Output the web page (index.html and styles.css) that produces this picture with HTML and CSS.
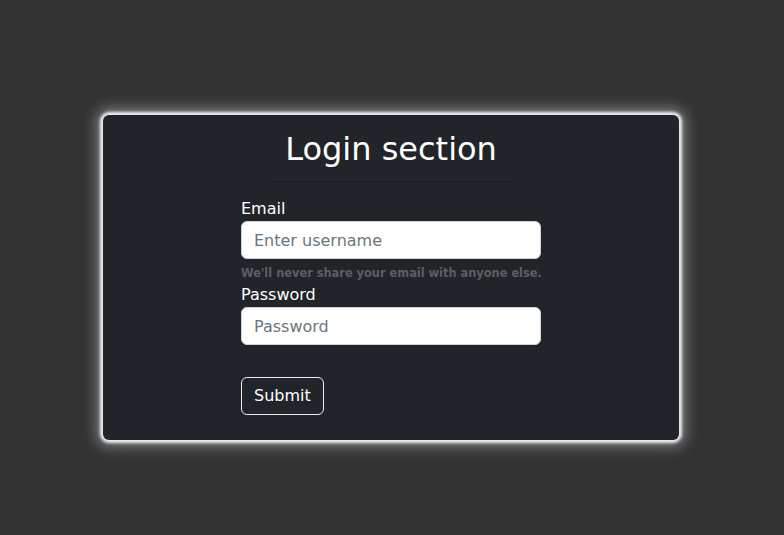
FILE: index.html
```html
<!DOCTYPE html>
<html>
<head>
<meta charset="utf-8">
<link rel="stylesheet" href="styles.css">
</head>
<body>
<div class="card">
  <h2 class="title">Login section</h2>
  <hr class="divider">
  <form class="form">
    <div class="field">
      <label class="label">Email</label>
      <input class="input" type="text" placeholder="Enter username">
      <small class="hint">We'll never share your email with anyone else.</small>
    </div>
    <div class="field">
      <label class="label">Password</label>
      <input class="input" type="password" placeholder="Password">
    </div>
    <button class="btn" type="button">Submit</button>
  </form>
</div>
</body>
</html>
```
FILE: styles.css
```css
html, body {
  margin: 0;
  padding: 0;
}
body {
  background: #333333;
  font-family: "DejaVu Sans", Verdana, sans-serif;
  color: #ffffff;
  height: 535px;
  overflow: hidden;
}
.card {
  box-sizing: border-box;
  margin: 115px 0 0 103px;
  width: 576px;
  height: 325px;
  background: #212529;
  border-radius: 6px;
  box-shadow: 0 0 3px 3px #e9eef3, 0 0 14px 7px rgba(255,255,255,0.35);
  padding-top: 1px;
}
.title {
  margin: 13px 0 0;
  text-align: center;
  font-size: 32px;
  font-weight: 400;
  line-height: 40px;
}
.divider {
  width: 242px;
  margin: 12px auto 0;
  border: 0;
  border-top: 1px solid #181b1e;
  height: 0;
}
.form {
  width: 300px;
  margin: 15px auto 0 138px;
  display: flex;
  flex-direction: column;
}
.field {
  display: flex;
  flex-direction: column;
}
.label {
  font-size: 16px;
  line-height: 24px;
}
.input {
  box-sizing: border-box;
  width: 300px;
  height: 38px;
  border: 1px solid #ced4da;
  border-radius: 6px;
  padding: 6px 12px;
  font-family: inherit;
  font-size: 16px;
  color: #212529;
  background: #fff;
  outline: none;
}
.input::placeholder {
  color: #6c757d;
}
.hint {
  margin-top: 4px;
  font-size: 11.4px;
  font-weight: bold;
  color: #5a5f64;
  line-height: 20px;
  white-space: nowrap;
}
.btn {
  align-self: flex-start;
  margin-top: 32px;
  box-sizing: border-box;
  height: 38px;
  padding: 6px 12px;
  background: transparent;
  border: 1px solid #e9ecef;
  border-radius: 6px;
  color: #fff;
  font-family: inherit;
  font-size: 16px;
  line-height: 24px;
}
```
